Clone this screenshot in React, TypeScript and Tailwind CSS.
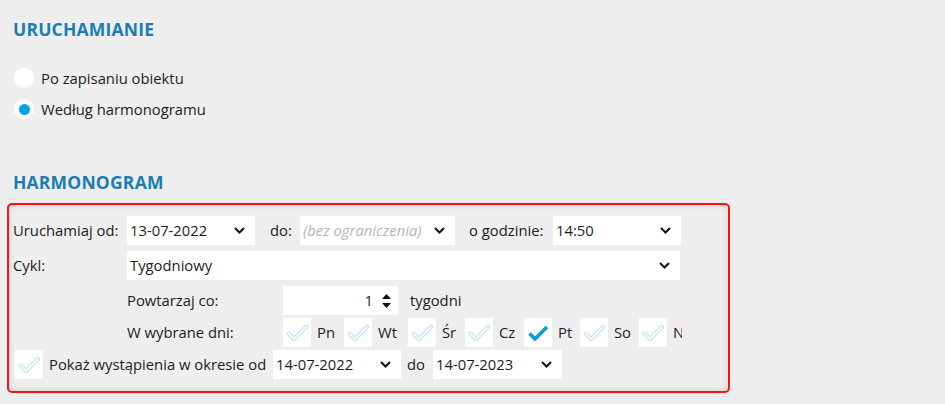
import React from 'react';

const Chevron = () => (
  <svg width="11" height="7" viewBox="0 0 11 7" className="shrink-0">
    <path d="M1 1l4.5 4.5L10 1" fill="none" stroke="#111" strokeWidth="2" />
  </svg>
);

const Select = ({ value, width, placeholder }: { value: string; width: string; placeholder?: boolean }) => (
  <div className={`${width} h-[29px] bg-white flex items-center justify-between pl-[3px] pr-[10px] shrink-0`}>
    <span className={placeholder ? 'italic text-[#b5b5b5]' : ''}>{value}</span>
    <Chevron />
  </div>
);

const CHECK_PATH = 'M2.5 9.5l5.5 5.5L20 3';

const Check = ({ checked }: { checked?: boolean }) => (
  <div className="w-[28px] h-[29px] bg-white flex items-center justify-center shrink-0">
    {checked ? (
      <svg width="22" height="18" viewBox="0 0 22 18">
        <path d={CHECK_PATH} fill="none" stroke="#0c9bd9" strokeWidth="3.6" strokeLinejoin="round" />
      </svg>
    ) : (
      <svg width="22" height="18" viewBox="0 0 22 18">
        <path d={CHECK_PATH} fill="none" stroke="#b9e0f3" strokeWidth="4" strokeLinejoin="round" strokeLinecap="round" />
        <path d={CHECK_PATH} fill="none" stroke="#ffffff" strokeWidth="1.8" strokeLinejoin="round" strokeLinecap="round" />
      </svg>
    )}
  </div>
);

const Radio = ({ checked }: { checked?: boolean }) => (
  <div className="w-[20px] h-[20px] rounded-full bg-white flex items-center justify-center shrink-0">
    {checked && <div className="w-[11px] h-[11px] rounded-full bg-[#0aa3e0]" />}
  </div>
);

// label column widths (text + spacing up to the next box)
const DAYS = [
  { label: 'Pn', w: 'w-[27px]' },
  { label: 'Wt', w: 'w-[30px]' },
  { label: 'Śr', w: 'w-[23px]' },
  { label: 'Cz', w: 'w-[25px]' },
  { label: 'Pt', w: 'w-[22px]', checked: true },
  { label: 'So', w: 'w-[25px]' },
  { label: 'N', w: 'w-[25px]' },
];

export default function App() {
  return (
    <div className="min-h-screen bg-[#eeeeee] font-['Open_Sans',sans-serif] text-[14.8px] text-[#1c1c1c] pt-[16px]">
      <div className="pl-[13px]">
        <h2 className="text-[17.5px] font-bold text-[#1b7db5] leading-[26px] tracking-[0.2px]">URUCHAMIANIE</h2>

        {/* Radios */}
        <div className="mt-[26px] flex flex-col gap-[11px] pl-[1px]">
          <div className="flex items-center gap-[7px] h-[20px]">
            <Radio />
            <span>Po zapisaniu obiektu</span>
          </div>
          <div className="flex items-center gap-[7px] h-[20px]">
            <Radio checked />
            <span>Według harmonogramu</span>
          </div>
        </div>

        <h2 className="mt-[50px] text-[17.5px] font-bold text-[#1b7db5] leading-[26px] tracking-[0.2px]">HARMONOGRAM</h2>
      </div>

      {/* Schedule box */}
      <div className="mt-[8px] ml-[7px] w-[723px] h-[190px] border-2 border-[#ff1010] rounded-[5px] shadow-[inset_0_0_6px_rgba(0,0,0,0.12)] pl-[4px] pt-[11px]">
        <div className="w-[669px] overflow-hidden flex flex-col">
          <div className="flex items-center h-[29px]">
            <span className="w-[114px] shrink-0">Uruchamiaj od:</span>
            <Select value="13-07-2022" width="w-[128px]" />
            <span className="ml-[15px] w-[30px] shrink-0">do:</span>
            <Select value="(bez ograniczenia)" width="w-[155px]" placeholder />
            <span className="ml-[14px] w-[84px] shrink-0">o godzinie:</span>
            <Select value="14:50" width="w-[128px]" />
          </div>

          <div className="flex items-center h-[29px] mt-[6px]">
            <span className="w-[114px] shrink-0">Cykl:</span>
            <Select value="Tygodniowy" width="w-[553px]" />
          </div>

          <div className="flex items-center h-[29px] mt-[6px] pl-[114px]">
            <span className="w-[156px] shrink-0">Powtarzaj co:</span>
            <div className="w-[115px] h-[29px] bg-white flex items-center justify-end pr-[7px] gap-[9px] shrink-0">
              <span>1</span>
              <div className="flex flex-col gap-[4px]">
                <svg width="9" height="5" viewBox="0 0 9 5"><path d="M0 5L4.5 0L9 5z" fill="#111" /></svg>
                <svg width="9" height="5" viewBox="0 0 9 5"><path d="M0 0L4.5 5L9 0z" fill="#111" /></svg>
              </div>
            </div>
            <span className="ml-[12px]">tygodni</span>
          </div>

          <div className="flex items-center h-[29px] mt-[3px] pl-[114px]">
            <span className="w-[156px] shrink-0">W wybrane dni:</span>
            <div className="flex items-center whitespace-nowrap">
              {DAYS.map((d) => (
                <div key={d.label} className="flex items-center gap-[6px] shrink-0">
                  <Check checked={d.checked} />
                  <span className={`${d.w} shrink-0`}>{d.label}</span>
                </div>
              ))}
            </div>
          </div>

          <div className="flex items-center h-[29px] mt-[3px] pl-[2px]">
            <Check />
            <span className="ml-[6px] w-[224px] shrink-0">Pokaż wystąpienia w okresie od</span>
            <Select value="14-07-2022" width="w-[128px]" />
            <span className="ml-[6px] w-[26px] shrink-0">do</span>
            <Select value="14-07-2023" width="w-[129px]" />
          </div>
        </div>
      </div>
    </div>
  );
}
